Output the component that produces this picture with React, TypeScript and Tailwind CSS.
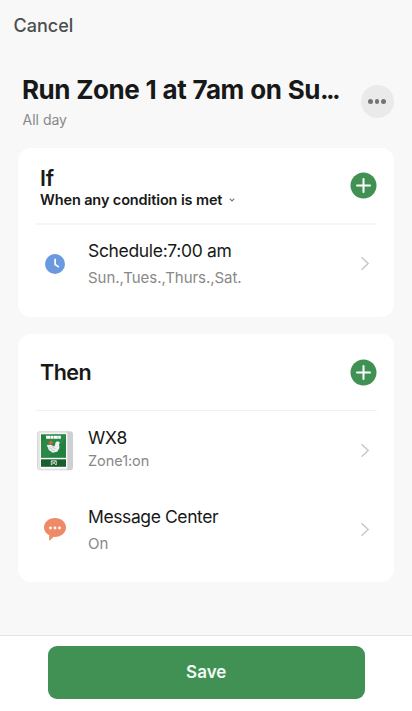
import React from 'react';

type RowProps = {
  icon: React.ReactNode;
  title: React.ReactNode;
  detail: React.ReactNode;
};

function AddButton() {
  return (
    <button aria-label="Add" className="shrink-0">
      <svg width="27" height="27" viewBox="0 0 27 27" className="block">
        <circle cx="13.5" cy="13.5" r="13" fill="#419155" />
        <path d="M13.5 7v13M7 13.5h13" stroke="#fff" strokeWidth="2" strokeLinecap="round" />
      </svg>
    </button>
  );
}

function ClockIcon() {
  return (
    <svg width="20" height="20" viewBox="0 0 20 20">
      <circle cx="10" cy="10" r="10" fill="#6b99df" />
      <path d="M10.1 5.3v5.2l3.3 2.1" stroke="#fff" strokeWidth="1.7" fill="none" strokeLinecap="round" />
    </svg>
  );
}

function MessageIcon() {
  return (
    <svg width="22" height="23" viewBox="0 0 22 23">
      <path
        d="M11 0C4.9 0 0 4 0 9.5c0 3.4 2 6.2 5.2 7.7V22c0 .6.6.8 1 .3l3.3-3.5 1.5.1c6.1 0 11-4 11-9.4S17.1 0 11 0z"
        fill="#ef8a66"
      />
      <circle cx="6.5" cy="10" r="1.4" fill="#fff" />
      <circle cx="11" cy="10" r="1.4" fill="#fff" />
      <circle cx="15.5" cy="10" r="1.4" fill="#fff" />
    </svg>
  );
}

function DeviceIcon() {
  return (
    <svg width="38" height="42" viewBox="0 0 38 42">
      <rect x="1" y="1.2" width="36" height="39" rx="3" fill="#cfcfd2" />
      <rect x="1.6" y="1.8" width="30" height="38" rx="2" fill="#e6e6e9" />
      <rect x="4.3" y="3.5" width="26.5" height="35" fill="#fff" />
      <rect x="5" y="4.3" width="25" height="23.5" fill="#23813f" />
      <path d="M5 12L16 4.3h14v4L12 27.8H5z" fill="#348e4e" opacity=".55" />
      <rect x="5" y="29.3" width="25" height="7.5" fill="#17602d" />
      <path d="M10 7.2h15" stroke="#fff" strokeWidth="3" strokeDasharray="4.2 .4 2.6 .4" />
      <path
        d="M10.8 15l3.7-.2 4 1.8 1.3-4.6 2.2-.8 2 1.500-1 1.500.5 3.800-2.300 3.700-4.500 1.100-3.900-2.900z"
        fill="#eef0ee"
      />
      <path d="M13 17.5l5.5 3.5M15.5 16.5l4 2.5" stroke="#a9b5ad" strokeWidth=".7" />
      <path d="M12.3 12.2l3-1.7 1.7 2.2-2.3 2.2z" fill="#e0623f" />
      <path d="M15.3 35v-4.2h5V35M15.5 31l4.5 3.8M20 31l-4.5 3.8" stroke="#d6e5da" strokeWidth=".9" fill="none" />
    </svg>
  );
}

function Row({ icon, title, detail }: RowProps) {
  return (
    <div className="flex h-[79px] items-center">
      <div className="flex w-[38px] shrink-0 justify-center">{icon}</div>
      <div className="ml-[14px] flex-1 whitespace-nowrap">
        {title}
        {detail}
      </div>
      <svg width="10" height="15" viewBox="0 0 10 15" className="mr-[7.5px]">
        <path d="M1.5 1.2L8.2 7.5 1.5 13.8" stroke="#c6c6c6" strokeWidth="1.4" fill="none" />
      </svg>
    </div>
  );
}

export default function App() {
  return (
    <div className="flex h-[711px] w-[412px] flex-col overflow-hidden bg-[#f8f8f8] font-['Inter',sans-serif] text-[#171918]">
      <header className="flex h-[49px] shrink-0 items-center pl-[13.5px] pt-[2px]">
        <button className="text-[18px] font-medium leading-6 text-[#4c4d4d]">Cancel</button>
      </header>

      <main className="flex-1 pl-[18px] pr-[18px]">
        {/* Scene name */}
        <div className="flex h-[99px] justify-between pl-1 pt-[25px]">
          <div className="whitespace-nowrap">
            <h1 className="text-[26px] font-bold leading-8 tracking-[-0.5px] [word-spacing:0.7px]">
              Run Zone 1 at 7am on Su<span className="tracking-[-2.6px]">...</span>
            </h1>
            <p className="mt-[4px] pl-[0.5px] text-[14px] leading-5 text-[#888]">All day</p>
          </div>
          <button
            aria-label="More"
            className="mr-[0.5px] mt-[11px] flex h-[33px] w-[33px] shrink-0 items-center justify-center gap-[2px] rounded-full bg-[#eaeaea]"
          >
            <span className="h-[4.5px] w-[4.5px] rounded-full bg-[#747474]" />
            <span className="h-[4.5px] w-[4.5px] rounded-full bg-[#747474]" />
            <span className="h-[4.5px] w-[4.5px] rounded-full bg-[#747474]" />
          </button>
        </div>

        {/* Conditions */}
        <section className="h-[169px] rounded-[13px] bg-white pl-[18px] pr-[17px]">
          <div className="flex h-[77px] items-center justify-between border-b-2 border-[#f6f6f6] pl-1">
            <div className="pt-[5px]">
              <h2 className="text-[21.5px] font-semibold leading-6 tracking-[-0.3px]">If</h2>
              <div className="flex items-center gap-[7px] whitespace-nowrap text-[14.5px] font-semibold leading-5 tracking-[-0.12px]">
                <span>When any condition is met</span>
                <svg width="6" height="4" viewBox="0 0 6 4">
                  <path d="M.7.7L3 3 5.3.7" stroke="#777" strokeWidth="1.1" fill="none" />
                </svg>
              </div>
            </div>
            <AddButton />
          </div>
          <div className="-mt-px">
            <Row
              icon={<ClockIcon />}
              title={<h3 className="-mt-px text-[17.5px] leading-6 tracking-[-0.33px]">Schedule:7:00 am</h3>}
              detail={<p className="mt-[5px] text-[15px] leading-5 tracking-[-0.05px] text-[#888]">Sun.,Tues.,Thurs.,Sat.</p>}
            />
          </div>
        </section>

        {/* Actions */}
        <section className="mt-[17px] h-[248px] rounded-[13px] bg-white pl-[18px] pr-[17px]">
          <div className="flex h-[77px] items-center justify-between border-b border-[#f0f0f0] pl-1">
            <h2 className="text-[21.5px] font-semibold leading-6 tracking-[-0.5px]">Then</h2>
            <AddButton />
          </div>
          <Row
            icon={<DeviceIcon />}
            title={<h3 className="-mt-[5px] text-[17.5px] leading-6 tracking-[-0.2px]">WX8</h3>}
            detail={<p className="mt-px text-[14.5px] leading-5 tracking-[-0.05px] text-[#888]">Zone1:on</p>}
          />
          <Row
            icon={<MessageIcon />}
            title={<h3 className="-mt-px text-[17.5px] leading-6 tracking-[-0.4px]">Message Center</h3>}
            detail={<p className="mt-[5px] text-[15px] leading-5 text-[#888]">On</p>}
          />
        </section>
      </main>

      <footer className="h-[76px] shrink-0 border-t border-[#e4e4e4] bg-white pl-[47.5px] pt-[10px]">
        <button className="h-[53px] w-[317.5px] rounded-[9px] bg-[#419155] text-[17px] font-semibold text-[#f1fbf4]">
          Save
        </button>
      </footer>
    </div>
  );
}
